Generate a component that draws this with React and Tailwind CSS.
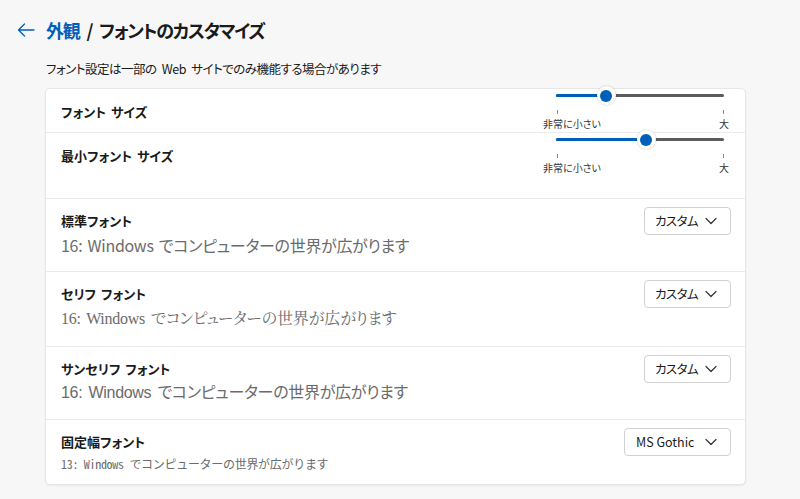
const jp = "font-['Segoe_UI','Noto_Sans_CJK_JP',sans-serif] [font-feature-settings:'palt']";

function Chevron() {
  return (
    <svg width="12" height="8" viewBox="0 0 12 8" fill="none">
      <path d="M1 1.5L6 6.5L11 1.5" stroke="#333" strokeWidth="1.2" strokeLinecap="round" strokeLinejoin="round" />
    </svg>
  );
}

function Dropdown({ value, wide }) {
  return (
    <div
      className={`flex items-center justify-between h-[28px] ${wide ? "w-[107px] pl-[11px]" : "w-[87px] pl-[10px] tracking-[-0.6px]"} pr-[13px] rounded-[4px] border border-[#d1d1d1] bg-white text-[12.5px] text-[#1a1a1a] whitespace-nowrap shrink-0`}
    >
      <span>{value}</span>
      <Chevron />
    </div>
  );
}

function Slider({ pos }) {
  return (
    <div className="relative w-[204px] h-[44px] shrink-0">
      <div className="absolute left-[28px] top-[4px] w-[168px] h-[3px] rounded-full bg-[#5c5c5c]" />
      <div className="absolute left-[28px] top-[4px] h-[3px] rounded-full bg-[#005fb8]" style={{ width: pos }} />
      <div
        className="absolute top-[-4px] w-[19px] h-[19px] rounded-full bg-white shadow-[0_0_2px_rgba(0,0,0,0.25)] flex items-center justify-center"
        style={{ left: 28 + pos - 9.5 }}
      >
        <div className="w-[12px] h-[12px] rounded-full bg-[#005fb8]" />
      </div>
      <div className="absolute left-[29px] top-[20px] w-px h-[4px] bg-[#8a8a8a]" />
      <div className="absolute left-[195px] top-[20px] w-px h-[4px] bg-[#8a8a8a]" />
      <span className="absolute left-[15px] top-[27px] text-[10px] leading-[14px] text-[#333] whitespace-nowrap">非常に小さい</span>
      <span className="absolute left-[191px] top-[27px] text-[10px] leading-[14px] text-[#333]">大</span>
    </div>
  );
}

function FontRow({ label, sample, sampleClass, value, wide, height, last }) {
  return (
    <div className={`flex items-start justify-between pl-[15px] pr-[14px] pt-[8px] ${last ? "" : "border-b border-[#ebebeb]"}`} style={{ height }}>
      <div className="flex flex-col">
        <span className="mt-[5px] text-[13px] leading-[18px] font-semibold text-[#1a1a1a] [word-spacing:2px]">{label}</span>
        <span className={sampleClass}>{sample}</span>
      </div>
      <Dropdown value={value} wide={wide} />
    </div>
  );
}

export default function App() {
  const sample = "16: Windows でコンピューターの世界が広がります";
  return (
    <div className={`w-[800px] h-[499px] bg-[#f7f7f7] overflow-hidden ${jp}`}>
      <div className="flex items-center h-[58px] pl-[16px] pt-[2px]">
        <svg width="20" height="16" viewBox="0 0 20 16" fill="none" className="mr-[10px]">
          <path d="M18 8H2.5M8.5 2L2.5 8L8.5 14" stroke="#005fb8" strokeWidth="1.3" strokeLinecap="round" strokeLinejoin="round" />
        </svg>
        <h1 className="flex items-center text-[18px] font-semibold text-[#1a1a1a] tracking-[-1.3px]">
          <span className="text-[#005fb8]">外観</span>
          <span className="mx-[7px]">/</span>
          <span>フォントのカスタマイズ</span>
        </h1>
      </div>
      <p className="pl-[46px] mt-[2px] text-[12.5px] leading-[18px] text-[#1a1a1a] tracking-[-0.5px] [word-spacing:3px]">
        フォント設定は一部の Web サイトでのみ機能する場合があります
      </p>
      <div className="ml-[45px] mt-[10px] w-[701px] bg-white rounded-[5px] border border-[#e6e6e6] shadow-[0_1px_2px_rgba(0,0,0,0.06)]">
        <div className="flex justify-between pl-[15px] pr-[13px] h-[44px] border-b border-[#ebebeb]">
          <span className="mt-[14px] text-[13px] leading-[18px] font-semibold text-[#1a1a1a] [word-spacing:2px]">フォント サイズ</span>
          <div className="mt-[1px]">
            <Slider pos={50} />
          </div>
        </div>
        <div className="flex justify-between pl-[15px] pr-[13px] h-[66px] border-b border-[#ebebeb]">
          <span className="mt-[14px] text-[13px] leading-[18px] font-semibold text-[#1a1a1a] [word-spacing:2px]">最小フォント サイズ</span>
          <div className="mt-[1px]">
            <Slider pos={90} />
          </div>
        </div>
        <FontRow
          label="標準フォント"
          sample={sample}
          sampleClass="mt-[4px] text-[16px] leading-[22px] text-[#6b6b6b] tracking-[-0.3px] [word-spacing:2px]"
          value="カスタム"
          height={73}
        />
        <FontRow
          label="セリフ フォント"
          sample={sample}
          sampleClass="mt-[5px] text-[16px] leading-[22px] text-[#6b6b6b] tracking-[-0.25px] [word-spacing:2px] font-['Liberation_Serif','Noto_Serif_CJK_JP','Noto_Sans_CJK_JP',serif]"
          value="カスタム"
          height={75}
        />
        <FontRow
          label="サンセリフ フォント"
          sample={sample}
          sampleClass="mt-[4px] text-[16px] leading-[22px] text-[#6b6b6b] tracking-[-0.3px] [word-spacing:2px] font-['Liberation_Sans','Noto_Sans_CJK_JP',sans-serif]"
          value="カスタム"
          height={73}
        />
        <FontRow
          label="固定幅フォント"
          sample="13: Windows でコンピューターの世界が広がります"
          sampleClass="mt-[5px] text-[12px] leading-[16px] text-[#6b6b6b] tracking-[-0.3px] font-['Noto_Sans_Mono_CJK_JP','Liberation_Mono','Noto_Sans_CJK_JP',monospace]"
          value="MS Gothic"
          wide
          height={64}
          last
        />
      </div>
    </div>
  );
}
